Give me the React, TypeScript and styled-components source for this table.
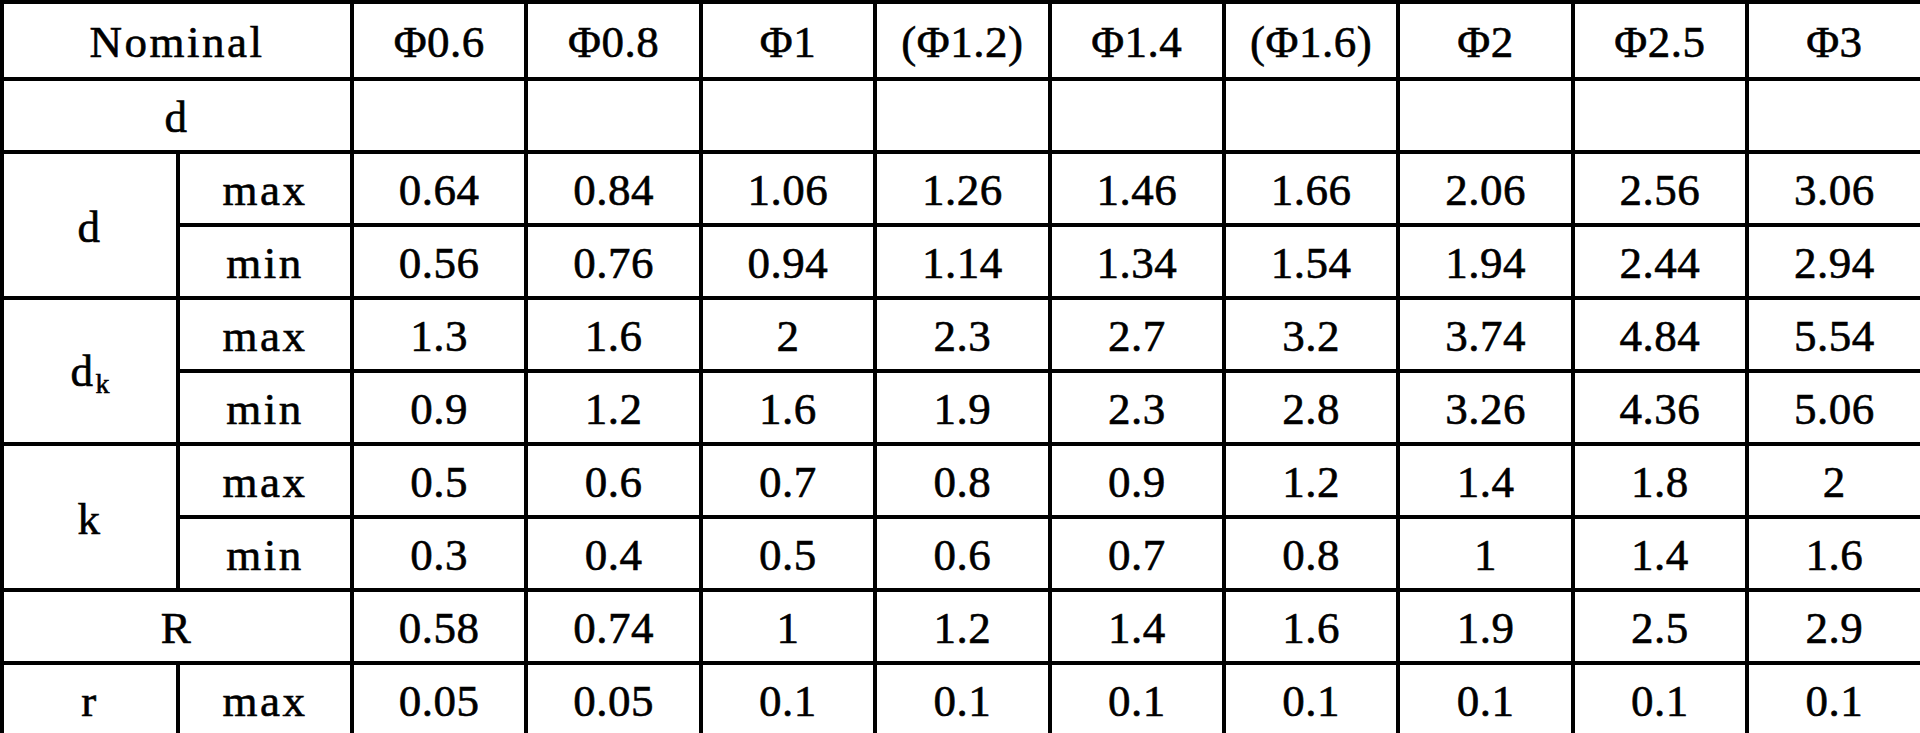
import React from "react";
import styled, { createGlobalStyle } from "styled-components";

const Global = createGlobalStyle`
  html, body { margin: 0; padding: 0; background: #ffffff; }
  #root { width: 1920px; height: 733px; }
`;

const Table = styled.table`
  width: 1920px;
  height: 733px;
  border-collapse: collapse;
  table-layout: fixed;
  font-family: "Liberation Serif", "Times New Roman", serif;
  font-size: 45px;
  letter-spacing: 0.5px;
  color: #000;
  background: #fff;
  -webkit-text-stroke: 0.6px #000;
`;

const Row = styled.tr<{ $h: number }>`
  height: ${(p) => p.$h}px;
`;

const Cell = styled.td<{ $label?: boolean }>`
  border: 4px solid #000;
  text-align: center;
  vertical-align: middle;
  padding: 4px 0 0 0;
  line-height: 1;
  white-space: nowrap;
  letter-spacing: ${(p) => (p.$label ? "2.5px" : "0.5px")};
`;

const Sub = styled.sub`
  font-size: 0.62em;
  vertical-align: -0.25em;
  letter-spacing: 0;
`;

const headers = ["Φ0.6", "Φ0.8", "Φ1", "(Φ1.2)", "Φ1.4", "(Φ1.6)", "Φ2", "Φ2.5", "Φ3"];

type Group = {
  label: React.ReactNode;
  rows: { sub: string; values: string[] }[];
};

const groups: Group[] = [
  {
    label: "d",
    rows: [
      { sub: "max", values: ["0.64", "0.84", "1.06", "1.26", "1.46", "1.66", "2.06", "2.56", "3.06"] },
      { sub: "min", values: ["0.56", "0.76", "0.94", "1.14", "1.34", "1.54", "1.94", "2.44", "2.94"] },
    ],
  },
  {
    label: (
      <>
        d<Sub>k</Sub>
      </>
    ),
    rows: [
      { sub: "max", values: ["1.3", "1.6", "2", "2.3", "2.7", "3.2", "3.74", "4.84", "5.54"] },
      { sub: "min", values: ["0.9", "1.2", "1.6", "1.9", "2.3", "2.8", "3.26", "4.36", "5.06"] },
    ],
  },
  {
    label: "k",
    rows: [
      { sub: "max", values: ["0.5", "0.6", "0.7", "0.8", "0.9", "1.2", "1.4", "1.8", "2"] },
      { sub: "min", values: ["0.3", "0.4", "0.5", "0.6", "0.7", "0.8", "1", "1.4", "1.6"] },
    ],
  },
];

const rValues = ["0.58", "0.74", "1", "1.2", "1.4", "1.6", "1.9", "2.5", "2.9"];
const smallR = ["0.05", "0.05", "0.1", "0.1", "0.1", "0.1", "0.1", "0.1", "0.1"];

export default function App() {
  return (
    <>
      <Global />
      <Table>
        <colgroup>
          <col style={{ width: 176 }} />
          <col style={{ width: 174 }} />
          {headers.map((h) => (
            <col key={h} style={{ width: 174.4 }} />
          ))}
        </colgroup>
        <tbody>
          <Row $h={77}>
            <Cell colSpan={2} $label>
              Nominal
            </Cell>
            {headers.map((h) => (
              <Cell key={h}>{h}</Cell>
            ))}
          </Row>
          <Row $h={73}>
            <Cell colSpan={2} $label>
              d
            </Cell>
            {headers.map((h) => (
              <Cell key={h}></Cell>
            ))}
          </Row>
          {groups.map((g, gi) =>
            g.rows.map((r, ri) => (
              <Row $h={73} key={`${gi}-${ri}`}>
                {ri === 0 && (
                  <Cell rowSpan={2} $label>
                    {g.label}
                  </Cell>
                )}
                <Cell $label>{r.sub}</Cell>
                {r.values.map((v, vi) => (
                  <Cell key={vi}>{v}</Cell>
                ))}
              </Row>
            ))
          )}
          <Row $h={73}>
            <Cell colSpan={2} $label>
              R
            </Cell>
            {rValues.map((v, vi) => (
              <Cell key={vi}>{v}</Cell>
            ))}
          </Row>
          <Row $h={72}>
            <Cell $label>r</Cell>
            <Cell $label>max</Cell>
            {smallR.map((v, vi) => (
              <Cell key={vi}>{v}</Cell>
            ))}
          </Row>
        </tbody>
      </Table>
    </>
  );
}
